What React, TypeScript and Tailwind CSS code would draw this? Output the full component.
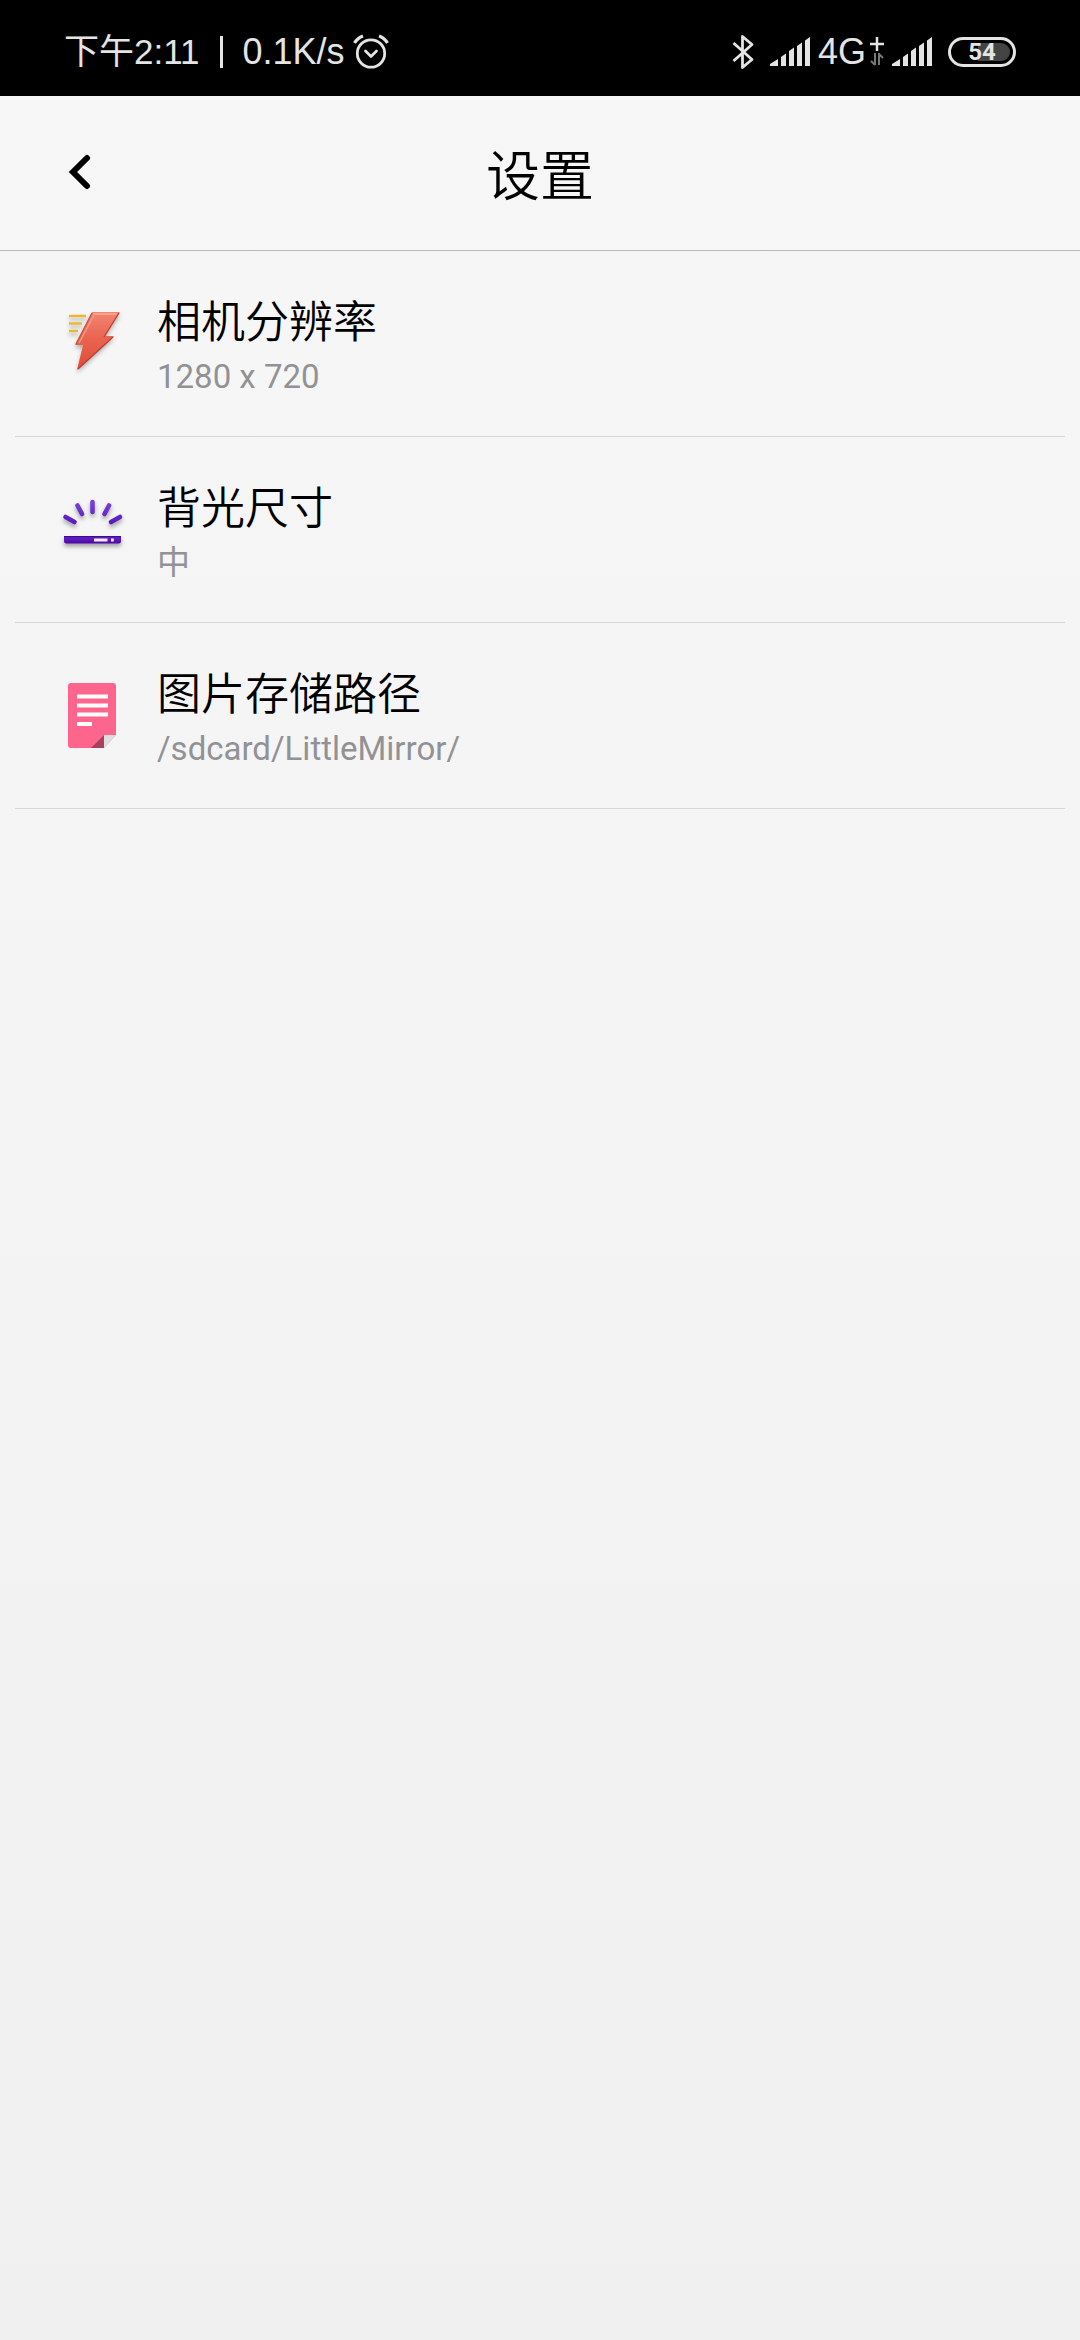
import type { ReactNode } from 'react';

const BoltIcon = () => (
  <svg viewBox="0 0 72 72" className="h-[72px] w-[72px]" aria-hidden="true">
    <defs>
      <linearGradient id="bolt" x1="0" y1="0" x2="0" y2="1">
        <stop offset="0" stopColor="#f28672" />
        <stop offset="0.45" stopColor="#ea6450" />
        <stop offset="1" stopColor="#e04a38" />
      </linearGradient>
      <filter id="soft" x="-20%" y="-20%" width="140%" height="150%">
        <feDropShadow dx="0" dy="3" stdDeviation="2" floodColor="#000" floodOpacity="0.3" />
      </filter>
    </defs>
    <g filter="url(#soft)">
      <path d="M11 7h17M11 14.500h13M11 22h9" stroke="#ecb92e" strokeWidth="2.300" fill="none" />
      <path d="M34 3H62L47 27H56L19 61L25 36H17Z" fill="url(#bolt)" />
    </g>
    <path d="M35.500 5H58.500" stroke="#f9ab9a" strokeWidth="1.500" />
    <path d="M61 4L46 28M55 28L20 60" stroke="#bd3e30" strokeWidth="1.300" fill="none" />
    <path d="M34 4L18 35" stroke="#c9503f" strokeWidth="1.200" />
    <path d="M36 6L21 34" stroke="#f49a88" strokeWidth="1.500" />
  </svg>
);

const BacklightIcon = () => (
  <svg viewBox="0 0 72 72" className="h-[72px] w-[72px]" aria-hidden="true">
    <defs>
      <linearGradient id="bar" x1="0" y1="0" x2="0" y2="1">
        <stop offset="0" stopColor="#6a2bd0" />
        <stop offset="0.5" stopColor="#5c16bd" />
        <stop offset="1" stopColor="#4a0a9c" />
      </linearGradient>
      <linearGradient id="ray" gradientUnits="userSpaceOnUse" x1="0" y1="8" x2="0" y2="32">
        <stop offset="0" stopColor="#7a3edb" />
        <stop offset="1" stopColor="#5413b4" />
      </linearGradient>
      <filter id="shade" x="-20%" y="-20%" width="140%" height="160%">
        <feDropShadow dx="0" dy="3" stdDeviation="2" floodColor="#000" floodOpacity="0.35" />
      </filter>
    </defs>
    <g filter="url(#shade)">
      <path
        d="M7.500 22l9 5M19.500 10.500l4.500 8.500M34.500 7v10M51 10.500l-4.500 8.500M62 22l-9 5"
        stroke="url(#ray)"
        strokeWidth="4.600"
        strokeLinecap="round"
        fill="none"
      />
      <path d="M6 41H63V46a2.500 2.500 0 0 1-2.500 2.500H8.500A2.500 2.500 0 0 1 6 46Z" fill="url(#bar)" />
    </g>
    <path d="M6 41.600H63" stroke="#3d0d85" strokeWidth="1.200" />
    <rect x="36" y="43.500" width="13.500" height="3" fill="#f1eaf8" />
    <rect x="53" y="43.500" width="2.800" height="3" fill="#f1eaf8" />
  </svg>
);

const DocumentIcon = () => (
  <svg viewBox="0 0 72 72" className="h-[72px] w-[72px]" aria-hidden="true">
    <path d="M13 2H55a3 3 0 0 1 3 3V54L46 67H13a3 3 0 0 1-3-3V5a3 3 0 0 1 3-3Z" fill="#fe658c" />
    <path d="M33 67L46 54V67Z" fill="#a8405f" />
    <path d="M46 54H58L46 67Z" fill="#dedede" />
    <path d="M19 15.500h31M19 24.500h31M19 33.500h31M19 43h15" stroke="#fff" strokeWidth="4" fill="none" />
  </svg>
);

const AlarmIcon = () => (
  <svg viewBox="0 0 36 36" className="h-9 w-9" fill="none" stroke="#e4e4e4" strokeWidth="2.800" aria-hidden="true">
    <circle cx="18" cy="19.500" r="13.700" />
    <path d="M12.500 17l5.500 5.500 5.500-5.500" strokeLinecap="round" strokeLinejoin="round" />
    <path d="M1.500 9Q4.500 4 10 2M34.500 9Q31.500 4 26 2" strokeWidth="3.200" />
  </svg>
);

const BluetoothIcon = () => (
  <svg viewBox="0 0 22 36" className="h-9 w-[22px]" fill="none" stroke="#e4e4e4" strokeWidth="2.800" aria-hidden="true">
    <path d="M1.500 9L20 25.500 10.500 33.500V2.500L20 10.500 1.500 27" strokeLinejoin="round" />
  </svg>
);

const SignalIcon = () => (
  <svg viewBox="0 0 40 30" className="h-[30px] w-10" fill="#e4e4e4" aria-hidden="true">
    <path d="M0 29V27L8 22V29ZM11 20L16 16.500V29H11ZM19 14L24 10.500V29H19ZM27 9L32 5.500V29H27ZM35 3.500L40 0V29H35Z" />
  </svg>
);

const DataIcon = () => (
  <svg viewBox="0 0 14 30" className="mx-1 h-[30px] w-3.5" fill="none" aria-hidden="true">
    <path d="M7 0V14M0 7H14" stroke="#e4e4e4" strokeWidth="2.500" />
    <path d="M5 16V28M5 28L1 24M9 28V16M9 17L13 21" stroke="#777" strokeWidth="2" />
  </svg>
);

interface SettingRowProps {
  icon: ReactNode;
  title: string;
  value: string;
}

const SettingRow = ({ icon, title, value }: SettingRowProps) => (
  <li className="border-b border-[#d6d6d6]">
    <button type="button" className="flex w-full items-start gap-[27px] px-[43px] pt-11 pb-[37px] text-left">
      <span className="mt-3.5">{icon}</span>
      <span className="flex flex-col gap-1">
        <span className="text-[44px] leading-[56px] font-[350] text-black">{title}</span>
        <span className="text-[33px] leading-[44px] text-[#929296]">{value}</span>
      </span>
    </button>
  </li>
);

const StatusBar = () => (
  <div className="flex h-24 items-center justify-between bg-black px-16 pt-2 font-['Liberation_Sans','Noto_Sans_CJK_SC',sans-serif] text-[#e4e4e4]">
    <div className="flex items-center leading-10">
      <span className="text-[35px]">下午2:11</span>
      <span className="mx-5 h-8 w-[3px] bg-[#e4e4e4]" />
      <span className="text-[36px]">0.1K/s</span>
      <span className="ml-2">
        <AlarmIcon />
      </span>
    </div>
    <div className="flex items-center">
      <BluetoothIcon />
      <span className="ml-4">
        <SignalIcon />
      </span>
      <span className="ml-2 text-[36px] leading-10">4G</span>
      <DataIcon />
      <span className="ml-1">
        <SignalIcon />
      </span>
      <span className="relative ml-4 flex h-[30px] w-[68px] items-center justify-center rounded-full border-3 border-[#e4e4e4]">
        <span className="absolute top-[3px] right-[3px] h-[18px] w-8 rounded-r-full bg-[#444]" />
        <span className="relative font-[Roboto] text-[24px] leading-6 font-bold">54</span>
      </span>
    </div>
  </div>
);

const App = () => {
  return (
    <div className="min-h-screen bg-linear-to-b from-[#f7f7f7] to-[#f0f0f0] font-[Roboto,'Noto_Sans_CJK_SC',sans-serif]">
      <StatusBar />

      {/* Header */}
      <header className="grid h-[155px] grid-cols-3 items-center border-b border-[#b9b9b9] px-[60px]">
        <button type="button" aria-label="返回" className="flex h-16 w-16 items-center">
          <svg viewBox="0 0 40 40" className="h-10 w-10" fill="none" stroke="#000" strokeWidth="6" aria-hidden="true">
            <path d="M27 5L13 19L27 33" strokeLinecap="round" strokeLinejoin="miter" />
          </svg>
        </button>
        <h1 className="pt-2.5 text-center text-[54px] leading-[64px] font-[350] text-black">设置</h1>
      </header>

      {/* Settings list */}
      <ul className="mx-[15px]">
        <SettingRow icon={<BoltIcon />} title="相机分辨率" value="1280 x 720" />
        <SettingRow icon={<BacklightIcon />} title="背光尺寸" value="中" />
        <SettingRow icon={<DocumentIcon />} title="图片存储路径" value="/sdcard/LittleMirror/" />
      </ul>
    </div>
  );
};

export default App;
